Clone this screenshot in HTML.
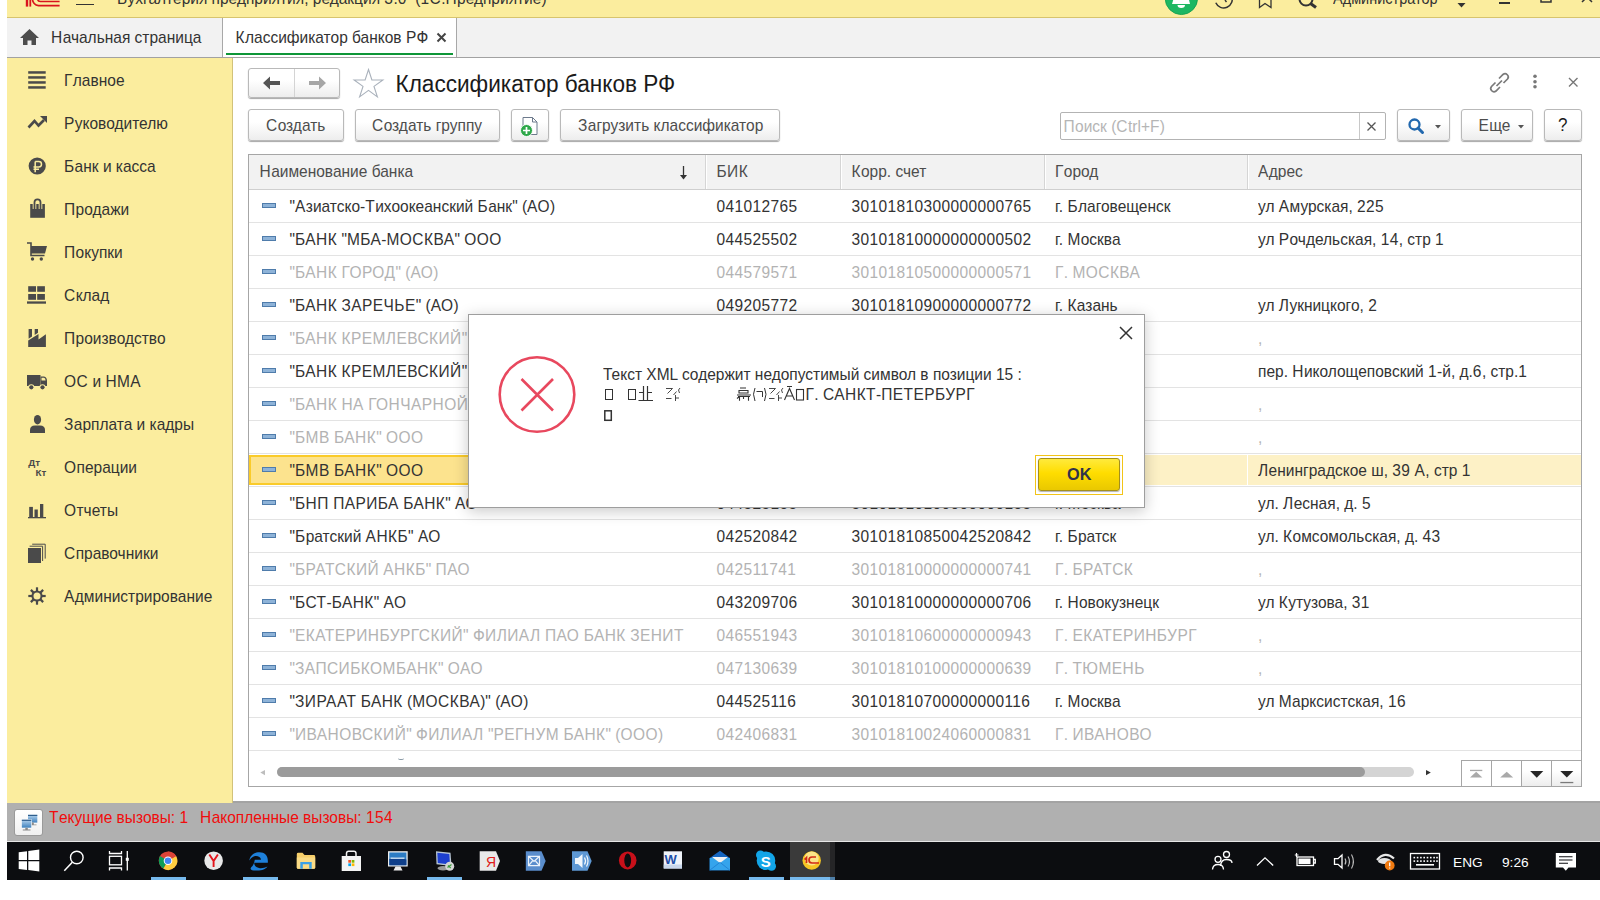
<!DOCTYPE html><html><head><meta charset="utf-8"><style>
html,body{margin:0;padding:0;}
body{width:1600px;height:900px;overflow:hidden;position:relative;background:#fff;font-family:"Liberation Sans", sans-serif;}
.t{position:absolute;white-space:pre;}
.b{position:absolute;box-sizing:border-box;}
.btn{position:absolute;box-sizing:border-box;border:1px solid #B9B9B9;border-radius:3px;background:linear-gradient(#FFFFFF 0%,#FFFFFF 40%,#EDEDED 100%);box-shadow:0 1px 1px rgba(0,0,0,0.35);}
svg{position:absolute;overflow:visible;}
</style></head><body>
<div class="b" style="left:7px;top:0px;width:1593px;height:17px;background:#FBED9E;"></div>
<div class="b" style="left:7px;top:17px;width:1593px;height:1px;background:#D7C46E;"></div>
<svg style="left:0px;top:0px;" width="1600" height="20" viewBox="0 0 1600 20"><g fill="#D9141E"><rect x="25.8" y="-2" width="2.4" height="8.6"/><rect x="29.4" y="-2" width="1.8" height="8.6"/></g><g fill="none" stroke="#D9141E" stroke-width="1.7"><path d="M59.6 5.6 H38.5 A6.5 6.5 0 0 1 32.5 -1"/><path d="M59.6 1.5 H40.5 A3 3 0 0 1 37.5 -1"/></g></svg>
<div class="b" style="left:76px;top:3.8px;width:17.8px;height:1.5px;background:#333;"></div>
<div class="t" style="left:117px;top:-9.67px;font-size:15.5px;line-height:18.6px;color:#333;transform:scaleY(1.08);transform-origin:0 14.67px;"><span style="letter-spacing:0.43px">Б</span>ухгалтерия предприятия, редакция <span style="letter-spacing:0.38px">3</span>.<span style="letter-spacing:0.38px">0</span>  (<span style="letter-spacing:0.38px">1</span><span style="letter-spacing:0.43px">С</span>:<span style="letter-spacing:0.43px">П</span>редприятие)</div>
<svg style="left:0px;top:0px;" width="1600" height="20" viewBox="0 0 1600 20"><circle cx="1181.4" cy="-1.65" r="16.2" fill="#1DB762" stroke="#12A04F" stroke-width="0.9"/><path d="M1173.5 -1 L1188.8 -1 L1190 4 L1172 4 Z" fill="#fff"/><path d="M1177.5 5 H1185 A3.75 3 0 0 1 1177.5 5 Z" fill="#fff"/></svg>
<svg style="left:0px;top:0px;" width="1600" height="20" viewBox="0 0 1600 20"><path d="M1215.8 2.8 A8.3 8.3 0 1 0 1231.5 -4" fill="none" stroke="#333" stroke-width="1.5"/><path d="M1225 0 L1226.5 2" stroke="#333" stroke-width="1.4"/></svg>
<svg style="left:1255px;top:-5px;" width="20" height="15" viewBox="0 0 20 15"><path d="M4.5 0 L4.5 12.5 L10 8.5 L16 12.5 L16 0" fill="none" stroke="#333" stroke-width="1.3" stroke-linejoin="miter"/></svg>
<svg style="left:1295px;top:-10px;" width="26" height="20" viewBox="0 0 26 20"><circle cx="11" cy="9" r="6.5" fill="none" stroke="#333" stroke-width="2"/><line x1="15.5" y1="13.5" x2="21" y2="17.5" stroke="#333" stroke-width="3"/></svg>
<div class="t" style="left:1333px;top:-8.72px;font-size:14.5px;line-height:17.4px;color:#333;transform:scaleY(1.08);transform-origin:0 13.72px;">Администратор</div>
<svg style="left:1455px;top:0px;" width="14" height="10" viewBox="0 0 14 10"><path d="M2.5 3 L10.5 3 L6.5 7.5Z" fill="#333"/></svg>
<div class="b" style="left:1499px;top:2px;width:11px;height:1.6px;background:#333;"></div>
<svg style="left:1538px;top:-6px;" width="18" height="12" viewBox="0 0 18 12"><rect x="3" y="0" width="10" height="8" fill="none" stroke="#333" stroke-width="1.5"/><path d="M6 -2 V-3 H16 V5 H13" fill="none" stroke="#333" stroke-width="1.3"/></svg>
<svg style="left:1580px;top:-8px;" width="18" height="14" viewBox="0 0 18 14"><path d="M2 0 L12 10 M12 0 L2 10" stroke="#333" stroke-width="1.5"/></svg>
<div class="b" style="left:7px;top:18px;width:1593px;height:39px;background:#F2F2F2;"></div>
<div class="b" style="left:7px;top:57px;width:1593px;height:1px;background:#A2A2A2;"></div>
<div class="b" style="left:222px;top:18px;width:1px;height:39px;background:#A8A8A8;"></div>
<div class="b" style="left:223px;top:18px;width:233px;height:39px;background:#FFFFFF;"></div>
<div class="b" style="left:456px;top:18px;width:1px;height:39px;background:#A8A8A8;"></div>
<div class="b" style="left:226px;top:53px;width:227px;height:2px;background:#0E9638;"></div>
<svg style="left:18px;top:27px;" width="24" height="20" viewBox="0 0 24 20"><path d="M11.5 2 L21 11 L18 11 L18 18 L13.5 18 L13.5 13.5 L9.5 13.5 L9.5 18 L5 18 L5 11 L2 11 Z" fill="#4D4D4D"/></svg>
<div class="t" style="left:51px;top:29.33px;font-size:15.5px;line-height:18.6px;color:#333;transform:scaleY(1.08);transform-origin:0 14.67px;"><span style="letter-spacing:0.43px">Н</span>ачальная страница</div>
<div class="t" style="left:235.5px;top:29.33px;font-size:15.5px;line-height:18.6px;color:#333;transform:scaleY(1.08);transform-origin:0 14.67px;"><span style="letter-spacing:0.43px">К</span>лассификатор банков <span style="letter-spacing:0.43px">РФ</span></div>
<svg style="left:436.3px;top:31.6px;" width="12" height="12" viewBox="0 0 12 12"><path d="M1.5 1.5 L9.5 9.5 M9.5 1.5 L1.5 9.5" stroke="#444" stroke-width="2"/></svg>
<div class="b" style="left:7px;top:58px;width:225px;height:745px;background:#FBED9E;"></div>
<div class="b" style="left:232px;top:58px;width:1px;height:745px;background:#D2C27A;"></div>
<div class="t" style="left:64px;top:72.33px;font-size:15.5px;line-height:18.6px;color:#333;transform:scaleY(1.08);transform-origin:0 14.67px;"><span style="letter-spacing:0.43px">Г</span>лавное</div>
<div class="t" style="left:64px;top:115.33px;font-size:15.5px;line-height:18.6px;color:#333;transform:scaleY(1.08);transform-origin:0 14.67px;"><span style="letter-spacing:0.43px">Р</span>уководителю</div>
<div class="t" style="left:64px;top:158.33px;font-size:15.5px;line-height:18.6px;color:#333;transform:scaleY(1.08);transform-origin:0 14.67px;"><span style="letter-spacing:0.43px">Б</span>анк и касса</div>
<div class="t" style="left:64px;top:201.33px;font-size:15.5px;line-height:18.6px;color:#333;transform:scaleY(1.08);transform-origin:0 14.67px;"><span style="letter-spacing:0.43px">П</span>родажи</div>
<div class="t" style="left:64px;top:244.33px;font-size:15.5px;line-height:18.6px;color:#333;transform:scaleY(1.08);transform-origin:0 14.67px;"><span style="letter-spacing:0.43px">П</span>окупки</div>
<div class="t" style="left:64px;top:287.33px;font-size:15.5px;line-height:18.6px;color:#333;transform:scaleY(1.08);transform-origin:0 14.67px;"><span style="letter-spacing:0.43px">С</span>клад</div>
<div class="t" style="left:64px;top:330.33px;font-size:15.5px;line-height:18.6px;color:#333;transform:scaleY(1.08);transform-origin:0 14.67px;"><span style="letter-spacing:0.43px">П</span>роизводство</div>
<div class="t" style="left:64px;top:373.33px;font-size:15.5px;line-height:18.6px;color:#333;transform:scaleY(1.08);transform-origin:0 14.67px;"><span style="letter-spacing:0.43px">ОС</span> и <span style="letter-spacing:0.43px">НМА</span></div>
<div class="t" style="left:64px;top:416.33px;font-size:15.5px;line-height:18.6px;color:#333;transform:scaleY(1.08);transform-origin:0 14.67px;"><span style="letter-spacing:0.43px">З</span>арплата и кадры</div>
<div class="t" style="left:64px;top:459.33px;font-size:15.5px;line-height:18.6px;color:#333;transform:scaleY(1.08);transform-origin:0 14.67px;"><span style="letter-spacing:0.43px">О</span>перации</div>
<div class="t" style="left:64px;top:502.33px;font-size:15.5px;line-height:18.6px;color:#333;transform:scaleY(1.08);transform-origin:0 14.67px;"><span style="letter-spacing:0.43px">О</span>тчеты</div>
<div class="t" style="left:64px;top:545.33px;font-size:15.5px;line-height:18.6px;color:#333;transform:scaleY(1.08);transform-origin:0 14.67px;"><span style="letter-spacing:0.43px">С</span>правочники</div>
<div class="t" style="left:64px;top:588.33px;font-size:15.5px;line-height:18.6px;color:#333;transform:scaleY(1.08);transform-origin:0 14.67px;"><span style="letter-spacing:0.43px">А</span>дминистрирование</div>
<svg style="left:0px;top:0px;pointer-events:none;z-index:1;" width="1600" height="900" viewBox="0 0 1600 900">
<g fill="#4A4A4A">
 <rect x="28.2" y="71.2" width="17.5" height="2.5"/><rect x="28.2" y="76.2" width="17.5" height="2.5"/><rect x="28.2" y="81.2" width="17.5" height="2.5"/><rect x="28.2" y="86.2" width="17.5" height="2.5"/>
 <path d="M28.5 127.5 L34.5 121 L38.5 125.5 L44 120" fill="none" stroke="#4A4A4A" stroke-width="2.6"/>
 <path d="M40 116 L47 116 L47 123 Z"/>
 <circle cx="37.2" cy="166" r="8.6"/>
 <path d="M30.2 204 H44.9 V217.8 H30.2 Z"/>
 <path d="M34.5 209 V202.3 A3 3 0 0 1 40.5 202.3 V209" fill="none" stroke="#FBED9E" stroke-width="3.6"/>
 <path d="M34.5 209 V202.3 A3 3 0 0 1 40.5 202.3 V209" fill="none" stroke="#4A4A4A" stroke-width="1.8"/>
 <path d="M27 243 H31 V255.5 H44.5" fill="none" stroke="#4A4A4A" stroke-width="1.6"/>
 <path d="M31 246 H47 L45 253.5 H31 Z"/>
 <circle cx="32.5" cy="259" r="1.7"/><circle cx="41.3" cy="259" r="1.7"/>
 <rect x="28.2" y="286.2" width="7.8" height="5.6"/><rect x="37.2" y="286.2" width="7.7" height="5.6"/>
 <rect x="28.2" y="294" width="7.8" height="5.8"/><rect x="37.2" y="294" width="7.7" height="5.8"/>
 <rect x="27" y="301.4" width="19" height="2.3"/>
 <path d="M28.6 329 H32 V336.6 L28.6 338.7 Z"/><path d="M34.7 329 H38 V332.8 L34.7 334.9 Z"/>
 <path d="M28.2 340.5 L38.5 334 L38.5 339.5 L45.9 334.3 L45.9 347 L28.2 347 Z"/>
 <path d="M27 375 H40.5 V386 H27 Z"/>
 <path d="M40.5 376.5 H44 Q47 377 47 381 V386 H40.5 Z"/>
 <circle cx="31.3" cy="387.3" r="3.1" fill="#FBED9E"/><circle cx="42.5" cy="387.3" r="3.1" fill="#FBED9E"/>
 <circle cx="31.3" cy="387.3" r="2.1"/><circle cx="42.5" cy="387.3" r="2.1"/>
 <ellipse cx="37.5" cy="419.7" rx="3.6" ry="4.8"/>
 <path d="M30 433 V430 Q30 425.5 35 425.5 H40 Q45 425.5 45 430 V433 Z"/>
 <rect x="29.2" y="506.9" width="3.7" height="10.3"/><rect x="34.5" y="509.5" width="3.3" height="7.7"/><rect x="40" y="504" width="3.3" height="13.2"/>
 <rect x="28" y="517" width="18" height="1.3"/>
 <rect x="28" y="548" width="13" height="15"/>
 <path d="M29.6 546.2 H42.6 V561" fill="none" stroke="#4A4A4A" stroke-width="1"/>
 <path d="M32.2 544.2 H45.2 V558.6" fill="none" stroke="#4A4A4A" stroke-width="1"/>
</g>
<g fill="#FBED9E">
 <path d="M35.2 161.6 H38.8 A2.7 2.7 0 0 1 38.8 167 H33.5 M35.2 161.6 V172.3 M33.5 169.3 H39" fill="none" stroke="#FBED9E" stroke-width="1.5"/>
 <path d="M41.5 377.8 H44 Q45.5 378 45.6 380.6 H41.5 Z"/>
</g>
<g stroke="#4A4A4A" stroke-width="2.2"><line x1="40.00" y1="596.00" x2="45.70" y2="596.00"/><line x1="39.12" y1="598.12" x2="43.15" y2="602.15"/><line x1="37.00" y1="599.00" x2="37.00" y2="604.70"/><line x1="34.88" y1="598.12" x2="30.85" y2="602.15"/><line x1="34.00" y1="596.00" x2="28.30" y2="596.00"/><line x1="34.88" y1="593.88" x2="30.85" y2="589.85"/><line x1="37.00" y1="593.00" x2="37.00" y2="587.30"/><line x1="39.12" y1="593.88" x2="43.15" y2="589.85"/></g><circle cx="37" cy="596" r="5.6" fill="#4A4A4A"/><circle cx="37" cy="596" r="3.5" fill="#FBED9E"/>
</svg>
<div class="t" style="left:28.3px;top:457.32px;font-size:9.8px;line-height:11.76px;color:#4A4A4A;font-weight:bold;z-index:2;">Дт</div>
<div class="t" style="left:35.6px;top:467.02px;font-size:9.8px;line-height:11.76px;color:#4A4A4A;font-weight:bold;z-index:2;">Кт</div>
<div class="btn" style="left:248px;top:68px;width:92px;height:30px;"></div>
<div class="b" style="left:294px;top:69px;width:1px;height:28px;background:#D4D4D4;"></div>
<svg style="left:260px;top:74px;" width="24" height="18" viewBox="0 0 24 18"><path d="M3 9 L10 2.5 L10 7 L20 7 L20 11 L10 11 L10 15.5 Z" fill="#555"/></svg>
<svg style="left:305px;top:74px;" width="24" height="18" viewBox="0 0 24 18"><path d="M21 9 L14 2.5 L14 7 L4 7 L4 11 L14 11 L14 15.5 Z" fill="#A6A6A6"/></svg>
<svg style="left:0px;top:0px;" width="1600" height="900" viewBox="0 0 1600 900"><path d="M368.50 69.50 L371.89 79.93 L382.86 79.93 L373.99 86.38 L377.38 96.82 L368.50 90.37 L359.62 96.82 L363.01 86.38 L354.14 79.93 L365.11 79.93 Z" fill="none" stroke="#A9B1BB" stroke-width="1.1" stroke-linejoin="miter"/></svg>
<div class="t" style="left:395.5px;top:70.61px;font-size:22.6px;line-height:27.12px;color:#1A1A1A;transform:scaleY(1.08);transform-origin:0 21.39px;">Классификатор банков РФ</div>
<svg style="left:1486px;top:70px;" width="26" height="24" viewBox="0 0 26 24"><g fill="none" stroke="#7A7A7A" stroke-width="1.7"><path d="M9.5 12.5 L5.5 16.5 A3.2 3.2 0 0 0 10 21 L14 17"/><path d="M13 8.5 L17 4.5 A3.2 3.2 0 0 1 21.5 9 L17.5 13"/><line x1="10.5" y1="16" x2="16" y2="10.5"/></g></svg>
<svg style="left:1530px;top:72px;" width="10" height="20" viewBox="0 0 10 20"><circle cx="5" cy="4.3" r="1.8" fill="#777"/><circle cx="5" cy="9.8" r="1.8" fill="#777"/><circle cx="5" cy="14.7" r="1.8" fill="#777"/></svg>
<svg style="left:1566px;top:75px;" width="14" height="14" viewBox="0 0 14 14"><path d="M3 3 L11.5 11.5 M11.5 3 L3 11.5" stroke="#777" stroke-width="1.4"/></svg>
<div class="btn" style="left:248px;top:109px;width:96px;height:32px;"></div>
<div class="t" style="left:266px;top:117.33px;font-size:15.5px;line-height:18.6px;color:#4D4D4D;transform:scaleY(1.08);transform-origin:0 14.67px;"><span style="letter-spacing:0.43px">С</span>оздать</div>
<div class="btn" style="left:355px;top:109px;width:145px;height:32px;"></div>
<div class="t" style="left:372px;top:117.33px;font-size:15.5px;line-height:18.6px;color:#4D4D4D;transform:scaleY(1.08);transform-origin:0 14.67px;"><span style="letter-spacing:0.43px">С</span>оздать группу</div>
<div class="btn" style="left:511px;top:109px;width:38px;height:32px;"></div>
<svg style="left:515px;top:112px;" width="30" height="28" viewBox="0 0 30 28"><path d="M8 5.5 H17.5 L22 10 V22.5 H8 Z" fill="#fff" stroke="#6D7A8C" stroke-width="1"/><path d="M17.5 5.5 V10 H22" fill="none" stroke="#6D7A8C" stroke-width="1"/><circle cx="11.5" cy="18.5" r="6" fill="#2EA84A" stroke="#fff" stroke-width="0.9"/><path d="M11.5 15 V22 M8 18.5 H15" stroke="#fff" stroke-width="1.7"/></svg>
<div class="btn" style="left:560px;top:109px;width:220px;height:32px;"></div>
<div class="t" style="left:578px;top:117.33px;font-size:15.5px;line-height:18.6px;color:#4D4D4D;transform:scaleY(1.08);transform-origin:0 14.67px;"><span style="letter-spacing:0.43px">З</span>агрузить классификатор</div>
<div class="b" style="left:1060px;top:112px;width:326px;height:28px;border:1px solid #B3B3B3;border-radius:2px;background:#fff;"></div>
<div class="b" style="left:1359px;top:113px;width:1px;height:26px;background:#C8C8C8;"></div>
<div class="t" style="left:1063.5px;top:118.33px;font-size:15.5px;line-height:18.6px;color:#B5B5B5;transform:scaleY(1.08);transform-origin:0 14.67px;"><span style="letter-spacing:0.43px">П</span>оиск (<span style="letter-spacing:0.43px">C</span>trl+<span style="letter-spacing:0.43px">F</span>)</div>
<svg style="left:1365px;top:120px;" width="14" height="14" viewBox="0 0 14 14"><path d="M2.5 2.5 L10.5 10.5 M10.5 2.5 L2.5 10.5" stroke="#555" stroke-width="1.3"/></svg>
<div class="btn" style="left:1397px;top:109px;width:53px;height:32px;"></div>
<svg style="left:1403.5px;top:113.5px;" width="26" height="24" viewBox="0 0 26 24"><circle cx="10.5" cy="10.5" r="5" fill="none" stroke="#2268AE" stroke-width="2.3"/><line x1="14" y1="14" x2="18.5" y2="18.5" stroke="#2268AE" stroke-width="3" stroke-linecap="round"/></svg>
<svg style="left:1434px;top:123px;" width="10" height="8" viewBox="0 0 10 8"><path d="M1 2 L7 2 L4 5.5Z" fill="#555"/></svg>
<div class="btn" style="left:1461px;top:109px;width:72px;height:32px;"></div>
<div class="t" style="left:1478.5px;top:117.33px;font-size:15.5px;line-height:18.6px;color:#4D4D4D;transform:scaleY(1.08);transform-origin:0 14.67px;"><span style="letter-spacing:0.43px">Е</span>ще</div>
<svg style="left:1517px;top:123px;" width="10" height="8" viewBox="0 0 10 8"><path d="M1 2 L7 2 L4 5.5Z" fill="#555"/></svg>
<div class="btn" style="left:1544px;top:109px;width:38px;height:32px;"></div>
<div class="t" style="left:1558px;top:116.41px;font-size:17px;line-height:20.4px;color:#1A1A1A;transform:scaleY(1.08);transform-origin:0 16.09px;">?</div>
<div class="b" style="left:248px;top:154px;width:1334px;height:633px;border:1px solid #A6A6A6;background:#fff;"></div>
<div class="b" style="left:249px;top:155px;width:1332px;height:34px;background:#F2F2F2;"></div>
<div class="b" style="left:249px;top:189px;width:1332px;height:1px;background:#CFCFCF;"></div>
<div class="b" style="left:705px;top:155px;width:1px;height:34px;background:#D5D5D5;"></div>
<div class="b" style="left:706px;top:155px;width:1px;height:34px;background:#FFFFFF;"></div>
<div class="b" style="left:840px;top:155px;width:1px;height:34px;background:#D5D5D5;"></div>
<div class="b" style="left:841px;top:155px;width:1px;height:34px;background:#FFFFFF;"></div>
<div class="b" style="left:1044px;top:155px;width:1px;height:34px;background:#D5D5D5;"></div>
<div class="b" style="left:1045px;top:155px;width:1px;height:34px;background:#FFFFFF;"></div>
<div class="b" style="left:1247px;top:155px;width:1px;height:34px;background:#D5D5D5;"></div>
<div class="b" style="left:1248px;top:155px;width:1px;height:34px;background:#FFFFFF;"></div>
<div class="t" style="left:259.5px;top:163.33px;font-size:15.5px;line-height:18.6px;color:#4D4D4D;transform:scaleY(1.08);transform-origin:0 14.67px;"><span style="letter-spacing:0.43px">Н</span>аименование банка</div>
<svg style="left:676px;top:163px;" width="14" height="20" viewBox="0 0 14 20"><path d="M7.5 3 V14" stroke="#333" stroke-width="1.3"/><path d="M4 12 L11 12 L7.5 16.5 Z" fill="#333"/></svg>
<div class="t" style="left:716.5px;top:163.33px;font-size:15.5px;line-height:18.6px;color:#4D4D4D;transform:scaleY(1.08);transform-origin:0 14.67px;"><span style="letter-spacing:0.43px">БИК</span></div>
<div class="t" style="left:851.5px;top:163.33px;font-size:15.5px;line-height:18.6px;color:#4D4D4D;transform:scaleY(1.08);transform-origin:0 14.67px;"><span style="letter-spacing:0.43px">К</span>орр. счет</div>
<div class="t" style="left:1055px;top:163.33px;font-size:15.5px;line-height:18.6px;color:#4D4D4D;transform:scaleY(1.08);transform-origin:0 14.67px;"><span style="letter-spacing:0.43px">Г</span>ород</div>
<div class="t" style="left:1258px;top:163.33px;font-size:15.5px;line-height:18.6px;color:#4D4D4D;transform:scaleY(1.08);transform-origin:0 14.67px;"><span style="letter-spacing:0.43px">А</span>дрес</div>
<div class="b" style="left:249px;top:222px;width:1332px;height:1px;background:#E3E3E3;"></div>
<div class="b" style="left:262px;top:203px;width:14px;height:5px;background:#8EB3D8;border:1px solid #4F7CAB;"></div>
<div class="t" style="left:289.5px;top:197.83px;font-size:15.5px;line-height:18.6px;color:#333333;transform:scaleY(1.08);transform-origin:0 14.67px;">"<span style="letter-spacing:0.43px">А</span>зиатско-<span style="letter-spacing:0.43px">Т</span>ихоокеанский <span style="letter-spacing:0.43px">Б</span>анк" (<span style="letter-spacing:0.43px">АО</span>)</div>
<div class="t" style="left:716.5px;top:197.83px;font-size:15.5px;line-height:18.6px;color:#333333;transform:scaleY(1.08);transform-origin:0 14.67px;"><span style="letter-spacing:0.38px">041012765</span></div>
<div class="t" style="left:851.5px;top:197.83px;font-size:15.5px;line-height:18.6px;color:#333333;transform:scaleY(1.08);transform-origin:0 14.67px;"><span style="letter-spacing:0.38px">30101810300000000765</span></div>
<div class="t" style="left:1055px;top:197.83px;font-size:15.5px;line-height:18.6px;color:#333333;transform:scaleY(1.08);transform-origin:0 14.67px;">г. <span style="letter-spacing:0.43px">Б</span>лаговещенск</div>
<div class="t" style="left:1258px;top:197.83px;font-size:15.5px;line-height:18.6px;color:#333333;transform:scaleY(1.08);transform-origin:0 14.67px;">ул <span style="letter-spacing:0.43px">А</span>мурская, <span style="letter-spacing:0.38px">225</span></div>
<div class="b" style="left:249px;top:255px;width:1332px;height:1px;background:#E3E3E3;"></div>
<div class="b" style="left:262px;top:236px;width:14px;height:5px;background:#8EB3D8;border:1px solid #4F7CAB;"></div>
<div class="t" style="left:289.5px;top:230.83px;font-size:15.5px;line-height:18.6px;color:#333333;transform:scaleY(1.08);transform-origin:0 14.67px;">"<span style="letter-spacing:0.43px">БАНК</span> "<span style="letter-spacing:0.43px">МБА</span>-<span style="letter-spacing:0.43px">МОСКВА</span>" <span style="letter-spacing:0.43px">ООО</span></div>
<div class="t" style="left:716.5px;top:230.83px;font-size:15.5px;line-height:18.6px;color:#333333;transform:scaleY(1.08);transform-origin:0 14.67px;"><span style="letter-spacing:0.38px">044525502</span></div>
<div class="t" style="left:851.5px;top:230.83px;font-size:15.5px;line-height:18.6px;color:#333333;transform:scaleY(1.08);transform-origin:0 14.67px;"><span style="letter-spacing:0.38px">30101810000000000502</span></div>
<div class="t" style="left:1055px;top:230.83px;font-size:15.5px;line-height:18.6px;color:#333333;transform:scaleY(1.08);transform-origin:0 14.67px;">г. <span style="letter-spacing:0.43px">М</span>осква</div>
<div class="t" style="left:1258px;top:230.83px;font-size:15.5px;line-height:18.6px;color:#333333;transform:scaleY(1.08);transform-origin:0 14.67px;">ул <span style="letter-spacing:0.43px">Р</span>очдельская, <span style="letter-spacing:0.38px">14</span>, стр <span style="letter-spacing:0.38px">1</span></div>
<div class="b" style="left:249px;top:288px;width:1332px;height:1px;background:#E3E3E3;"></div>
<div class="b" style="left:262px;top:269px;width:14px;height:5px;background:#8EB3D8;border:1px solid #4F7CAB;"></div>
<div class="t" style="left:289.5px;top:263.83px;font-size:15.5px;line-height:18.6px;color:#B3B3B3;transform:scaleY(1.08);transform-origin:0 14.67px;">"<span style="letter-spacing:0.43px">БАНК</span> <span style="letter-spacing:0.43px">ГОРОД</span>" (<span style="letter-spacing:0.43px">АО</span>)</div>
<div class="t" style="left:716.5px;top:263.83px;font-size:15.5px;line-height:18.6px;color:#B3B3B3;transform:scaleY(1.08);transform-origin:0 14.67px;"><span style="letter-spacing:0.38px">044579571</span></div>
<div class="t" style="left:851.5px;top:263.83px;font-size:15.5px;line-height:18.6px;color:#B3B3B3;transform:scaleY(1.08);transform-origin:0 14.67px;"><span style="letter-spacing:0.38px">30101810500000000571</span></div>
<div class="t" style="left:1055px;top:263.83px;font-size:15.5px;line-height:18.6px;color:#B3B3B3;transform:scaleY(1.08);transform-origin:0 14.67px;"><span style="letter-spacing:0.43px">Г</span>. <span style="letter-spacing:0.43px">МОСКВА</span></div>
<div class="t" style="left:1258px;top:263.83px;font-size:15.5px;line-height:18.6px;color:#B3B3B3;transform:scaleY(1.08);transform-origin:0 14.67px;"></div>
<div class="b" style="left:249px;top:321px;width:1332px;height:1px;background:#E3E3E3;"></div>
<div class="b" style="left:262px;top:302px;width:14px;height:5px;background:#8EB3D8;border:1px solid #4F7CAB;"></div>
<div class="t" style="left:289.5px;top:296.83px;font-size:15.5px;line-height:18.6px;color:#333333;transform:scaleY(1.08);transform-origin:0 14.67px;">"<span style="letter-spacing:0.43px">БАНК</span> <span style="letter-spacing:0.43px">ЗАРЕЧЬЕ</span>" (<span style="letter-spacing:0.43px">АО</span>)</div>
<div class="t" style="left:716.5px;top:296.83px;font-size:15.5px;line-height:18.6px;color:#333333;transform:scaleY(1.08);transform-origin:0 14.67px;"><span style="letter-spacing:0.38px">049205772</span></div>
<div class="t" style="left:851.5px;top:296.83px;font-size:15.5px;line-height:18.6px;color:#333333;transform:scaleY(1.08);transform-origin:0 14.67px;"><span style="letter-spacing:0.38px">30101810900000000772</span></div>
<div class="t" style="left:1055px;top:296.83px;font-size:15.5px;line-height:18.6px;color:#333333;transform:scaleY(1.08);transform-origin:0 14.67px;">г. <span style="letter-spacing:0.43px">К</span>азань</div>
<div class="t" style="left:1258px;top:296.83px;font-size:15.5px;line-height:18.6px;color:#333333;transform:scaleY(1.08);transform-origin:0 14.67px;">ул <span style="letter-spacing:0.43px">Л</span>укницкого, <span style="letter-spacing:0.38px">2</span></div>
<div class="b" style="left:249px;top:354px;width:1332px;height:1px;background:#E3E3E3;"></div>
<div class="b" style="left:262px;top:335px;width:14px;height:5px;background:#8EB3D8;border:1px solid #4F7CAB;"></div>
<div class="t" style="left:289.5px;top:329.83px;font-size:15.5px;line-height:18.6px;color:#B3B3B3;transform:scaleY(1.08);transform-origin:0 14.67px;">"<span style="letter-spacing:0.43px">БАНК</span> <span style="letter-spacing:0.43px">КРЕМЛЕВСКИЙ</span>" <span style="letter-spacing:0.43px">ООО</span></div>
<div class="t" style="left:716.5px;top:329.83px;font-size:15.5px;line-height:18.6px;color:#B3B3B3;transform:scaleY(1.08);transform-origin:0 14.67px;"><span style="letter-spacing:0.38px">044525594</span></div>
<div class="t" style="left:851.5px;top:329.83px;font-size:15.5px;line-height:18.6px;color:#B3B3B3;transform:scaleY(1.08);transform-origin:0 14.67px;"><span style="letter-spacing:0.38px">30101810400000000594</span></div>
<div class="t" style="left:1055px;top:329.83px;font-size:15.5px;line-height:18.6px;color:#B3B3B3;transform:scaleY(1.08);transform-origin:0 14.67px;"><span style="letter-spacing:0.43px">Г</span>. <span style="letter-spacing:0.43px">МОСКВА</span></div>
<div class="t" style="left:1258px;top:329.83px;font-size:15.5px;line-height:18.6px;color:#B3B3B3;transform:scaleY(1.08);transform-origin:0 14.67px;">,</div>
<div class="b" style="left:249px;top:387px;width:1332px;height:1px;background:#E3E3E3;"></div>
<div class="b" style="left:262px;top:368px;width:14px;height:5px;background:#8EB3D8;border:1px solid #4F7CAB;"></div>
<div class="t" style="left:289.5px;top:362.83px;font-size:15.5px;line-height:18.6px;color:#333333;transform:scaleY(1.08);transform-origin:0 14.67px;">"<span style="letter-spacing:0.43px">БАНК</span> <span style="letter-spacing:0.43px">КРЕМЛЕВСКИЙ</span>" <span style="letter-spacing:0.43px">ООО</span></div>
<div class="t" style="left:716.5px;top:362.83px;font-size:15.5px;line-height:18.6px;color:#333333;transform:scaleY(1.08);transform-origin:0 14.67px;"><span style="letter-spacing:0.38px">044525594</span></div>
<div class="t" style="left:851.5px;top:362.83px;font-size:15.5px;line-height:18.6px;color:#333333;transform:scaleY(1.08);transform-origin:0 14.67px;"><span style="letter-spacing:0.38px">30101810400000000594</span></div>
<div class="t" style="left:1055px;top:362.83px;font-size:15.5px;line-height:18.6px;color:#333333;transform:scaleY(1.08);transform-origin:0 14.67px;">г. <span style="letter-spacing:0.43px">М</span>осква</div>
<div class="t" style="left:1258px;top:362.83px;font-size:15.5px;line-height:18.6px;color:#333333;transform:scaleY(1.08);transform-origin:0 14.67px;">пер. <span style="letter-spacing:0.43px">Н</span>иколощеповский <span style="letter-spacing:0.38px">1</span>-й, д.<span style="letter-spacing:0.38px">6</span>, стр.<span style="letter-spacing:0.38px">1</span></div>
<div class="b" style="left:249px;top:420px;width:1332px;height:1px;background:#E3E3E3;"></div>
<div class="b" style="left:262px;top:401px;width:14px;height:5px;background:#8EB3D8;border:1px solid #4F7CAB;"></div>
<div class="t" style="left:289.5px;top:395.83px;font-size:15.5px;line-height:18.6px;color:#B3B3B3;transform:scaleY(1.08);transform-origin:0 14.67px;">"<span style="letter-spacing:0.43px">БАНК</span> <span style="letter-spacing:0.43px">НА</span> <span style="letter-spacing:0.43px">ГОНЧАРНОЙ</span>" (<span style="letter-spacing:0.43px">АО</span>)</div>
<div class="t" style="left:716.5px;top:395.83px;font-size:15.5px;line-height:18.6px;color:#B3B3B3;transform:scaleY(1.08);transform-origin:0 14.67px;"><span style="letter-spacing:0.38px">044525311</span></div>
<div class="t" style="left:851.5px;top:395.83px;font-size:15.5px;line-height:18.6px;color:#B3B3B3;transform:scaleY(1.08);transform-origin:0 14.67px;"><span style="letter-spacing:0.38px">30101810200000000311</span></div>
<div class="t" style="left:1055px;top:395.83px;font-size:15.5px;line-height:18.6px;color:#B3B3B3;transform:scaleY(1.08);transform-origin:0 14.67px;"><span style="letter-spacing:0.43px">Г</span>. <span style="letter-spacing:0.43px">МОСКВА</span></div>
<div class="t" style="left:1258px;top:395.83px;font-size:15.5px;line-height:18.6px;color:#B3B3B3;transform:scaleY(1.08);transform-origin:0 14.67px;">,</div>
<div class="b" style="left:249px;top:453px;width:1332px;height:1px;background:#E3E3E3;"></div>
<div class="b" style="left:262px;top:434px;width:14px;height:5px;background:#8EB3D8;border:1px solid #4F7CAB;"></div>
<div class="t" style="left:289.5px;top:428.83px;font-size:15.5px;line-height:18.6px;color:#B3B3B3;transform:scaleY(1.08);transform-origin:0 14.67px;">"<span style="letter-spacing:0.43px">БМВ</span> <span style="letter-spacing:0.43px">БАНК</span>" <span style="letter-spacing:0.43px">ООО</span></div>
<div class="t" style="left:716.5px;top:428.83px;font-size:15.5px;line-height:18.6px;color:#B3B3B3;transform:scaleY(1.08);transform-origin:0 14.67px;"><span style="letter-spacing:0.38px">044525767</span></div>
<div class="t" style="left:851.5px;top:428.83px;font-size:15.5px;line-height:18.6px;color:#B3B3B3;transform:scaleY(1.08);transform-origin:0 14.67px;"><span style="letter-spacing:0.38px">30101810900000000767</span></div>
<div class="t" style="left:1055px;top:428.83px;font-size:15.5px;line-height:18.6px;color:#B3B3B3;transform:scaleY(1.08);transform-origin:0 14.67px;"><span style="letter-spacing:0.43px">Г</span>. <span style="letter-spacing:0.43px">МОСКВА</span></div>
<div class="t" style="left:1258px;top:428.83px;font-size:15.5px;line-height:18.6px;color:#B3B3B3;transform:scaleY(1.08);transform-origin:0 14.67px;">,</div>
<div class="b" style="left:249px;top:455px;width:1332px;height:30px;background:#FDF1C6;"></div>
<div class="b" style="left:249px;top:455px;width:456px;height:30px;border:2.5px solid #FACB2A;background:#FCE38E;"></div>
<div class="b" style="left:1247px;top:455px;width:1px;height:30px;background:#FFFFFF;"></div>
<div class="b" style="left:249px;top:486px;width:1332px;height:1px;background:#E3E3E3;"></div>
<div class="b" style="left:262px;top:467px;width:14px;height:5px;background:#8EB3D8;border:1px solid #4F7CAB;"></div>
<div class="t" style="left:289.5px;top:461.83px;font-size:15.5px;line-height:18.6px;color:#333333;transform:scaleY(1.08);transform-origin:0 14.67px;">"<span style="letter-spacing:0.43px">БМВ</span> <span style="letter-spacing:0.43px">БАНК</span>" <span style="letter-spacing:0.43px">ООО</span></div>
<div class="t" style="left:716.5px;top:461.83px;font-size:15.5px;line-height:18.6px;color:#333333;transform:scaleY(1.08);transform-origin:0 14.67px;"><span style="letter-spacing:0.38px">044525767</span></div>
<div class="t" style="left:851.5px;top:461.83px;font-size:15.5px;line-height:18.6px;color:#333333;transform:scaleY(1.08);transform-origin:0 14.67px;"><span style="letter-spacing:0.38px">30101810900000000767</span></div>
<div class="t" style="left:1055px;top:461.83px;font-size:15.5px;line-height:18.6px;color:#333333;transform:scaleY(1.08);transform-origin:0 14.67px;">г. <span style="letter-spacing:0.43px">М</span>осква</div>
<div class="t" style="left:1258px;top:461.83px;font-size:15.5px;line-height:18.6px;color:#333333;transform:scaleY(1.08);transform-origin:0 14.67px;"><span style="letter-spacing:0.43px">Л</span>енинградское ш, <span style="letter-spacing:0.38px">39</span> <span style="letter-spacing:0.43px">А</span>, стр <span style="letter-spacing:0.38px">1</span></div>
<div class="b" style="left:249px;top:519px;width:1332px;height:1px;background:#E3E3E3;"></div>
<div class="b" style="left:262px;top:500px;width:14px;height:5px;background:#8EB3D8;border:1px solid #4F7CAB;"></div>
<div class="t" style="left:289.5px;top:494.83px;font-size:15.5px;line-height:18.6px;color:#333333;transform:scaleY(1.08);transform-origin:0 14.67px;">"<span style="letter-spacing:0.43px">БНП</span> <span style="letter-spacing:0.43px">ПАРИБА</span> <span style="letter-spacing:0.43px">БАНК</span>" <span style="letter-spacing:0.43px">АО</span></div>
<div class="t" style="left:716.5px;top:494.83px;font-size:15.5px;line-height:18.6px;color:#333333;transform:scaleY(1.08);transform-origin:0 14.67px;"><span style="letter-spacing:0.38px">044525185</span></div>
<div class="t" style="left:851.5px;top:494.83px;font-size:15.5px;line-height:18.6px;color:#333333;transform:scaleY(1.08);transform-origin:0 14.67px;"><span style="letter-spacing:0.38px">30101810100000000185</span></div>
<div class="t" style="left:1055px;top:494.83px;font-size:15.5px;line-height:18.6px;color:#333333;transform:scaleY(1.08);transform-origin:0 14.67px;">г. <span style="letter-spacing:0.43px">М</span>осква</div>
<div class="t" style="left:1258px;top:494.83px;font-size:15.5px;line-height:18.6px;color:#333333;transform:scaleY(1.08);transform-origin:0 14.67px;">ул. <span style="letter-spacing:0.43px">Л</span>есная, д. <span style="letter-spacing:0.38px">5</span></div>
<div class="b" style="left:249px;top:552px;width:1332px;height:1px;background:#E3E3E3;"></div>
<div class="b" style="left:262px;top:533px;width:14px;height:5px;background:#8EB3D8;border:1px solid #4F7CAB;"></div>
<div class="t" style="left:289.5px;top:527.83px;font-size:15.5px;line-height:18.6px;color:#333333;transform:scaleY(1.08);transform-origin:0 14.67px;">"<span style="letter-spacing:0.43px">Б</span>ратский <span style="letter-spacing:0.43px">АНКБ</span>" <span style="letter-spacing:0.43px">АО</span></div>
<div class="t" style="left:716.5px;top:527.83px;font-size:15.5px;line-height:18.6px;color:#333333;transform:scaleY(1.08);transform-origin:0 14.67px;"><span style="letter-spacing:0.38px">042520842</span></div>
<div class="t" style="left:851.5px;top:527.83px;font-size:15.5px;line-height:18.6px;color:#333333;transform:scaleY(1.08);transform-origin:0 14.67px;"><span style="letter-spacing:0.38px">30101810850042520842</span></div>
<div class="t" style="left:1055px;top:527.83px;font-size:15.5px;line-height:18.6px;color:#333333;transform:scaleY(1.08);transform-origin:0 14.67px;">г. <span style="letter-spacing:0.43px">Б</span>ратск</div>
<div class="t" style="left:1258px;top:527.83px;font-size:15.5px;line-height:18.6px;color:#333333;transform:scaleY(1.08);transform-origin:0 14.67px;">ул. <span style="letter-spacing:0.43px">К</span>омсомольская, д. <span style="letter-spacing:0.38px">43</span></div>
<div class="b" style="left:249px;top:585px;width:1332px;height:1px;background:#E3E3E3;"></div>
<div class="b" style="left:262px;top:566px;width:14px;height:5px;background:#8EB3D8;border:1px solid #4F7CAB;"></div>
<div class="t" style="left:289.5px;top:560.83px;font-size:15.5px;line-height:18.6px;color:#B3B3B3;transform:scaleY(1.08);transform-origin:0 14.67px;">"<span style="letter-spacing:0.43px">БРАТСКИЙ</span> <span style="letter-spacing:0.43px">АНКБ</span>" <span style="letter-spacing:0.43px">ПАО</span></div>
<div class="t" style="left:716.5px;top:560.83px;font-size:15.5px;line-height:18.6px;color:#B3B3B3;transform:scaleY(1.08);transform-origin:0 14.67px;"><span style="letter-spacing:0.38px">042511741</span></div>
<div class="t" style="left:851.5px;top:560.83px;font-size:15.5px;line-height:18.6px;color:#B3B3B3;transform:scaleY(1.08);transform-origin:0 14.67px;"><span style="letter-spacing:0.38px">30101810000000000741</span></div>
<div class="t" style="left:1055px;top:560.83px;font-size:15.5px;line-height:18.6px;color:#B3B3B3;transform:scaleY(1.08);transform-origin:0 14.67px;"><span style="letter-spacing:0.43px">Г</span>. <span style="letter-spacing:0.43px">БРАТСК</span></div>
<div class="t" style="left:1258px;top:560.83px;font-size:15.5px;line-height:18.6px;color:#B3B3B3;transform:scaleY(1.08);transform-origin:0 14.67px;">,</div>
<div class="b" style="left:249px;top:618px;width:1332px;height:1px;background:#E3E3E3;"></div>
<div class="b" style="left:262px;top:599px;width:14px;height:5px;background:#8EB3D8;border:1px solid #4F7CAB;"></div>
<div class="t" style="left:289.5px;top:593.83px;font-size:15.5px;line-height:18.6px;color:#333333;transform:scaleY(1.08);transform-origin:0 14.67px;">"<span style="letter-spacing:0.43px">БСТ</span>-<span style="letter-spacing:0.43px">БАНК</span>" <span style="letter-spacing:0.43px">АО</span></div>
<div class="t" style="left:716.5px;top:593.83px;font-size:15.5px;line-height:18.6px;color:#333333;transform:scaleY(1.08);transform-origin:0 14.67px;"><span style="letter-spacing:0.38px">043209706</span></div>
<div class="t" style="left:851.5px;top:593.83px;font-size:15.5px;line-height:18.6px;color:#333333;transform:scaleY(1.08);transform-origin:0 14.67px;"><span style="letter-spacing:0.38px">30101810000000000706</span></div>
<div class="t" style="left:1055px;top:593.83px;font-size:15.5px;line-height:18.6px;color:#333333;transform:scaleY(1.08);transform-origin:0 14.67px;">г. <span style="letter-spacing:0.43px">Н</span>овокузнецк</div>
<div class="t" style="left:1258px;top:593.83px;font-size:15.5px;line-height:18.6px;color:#333333;transform:scaleY(1.08);transform-origin:0 14.67px;">ул <span style="letter-spacing:0.43px">К</span>утузова, <span style="letter-spacing:0.38px">31</span></div>
<div class="b" style="left:249px;top:651px;width:1332px;height:1px;background:#E3E3E3;"></div>
<div class="b" style="left:262px;top:632px;width:14px;height:5px;background:#8EB3D8;border:1px solid #4F7CAB;"></div>
<div class="t" style="left:289.5px;top:626.83px;font-size:15.5px;line-height:18.6px;color:#B3B3B3;transform:scaleY(1.08);transform-origin:0 14.67px;">"<span style="letter-spacing:0.43px">ЕКАТЕРИНБУРГСКИЙ</span>" <span style="letter-spacing:0.43px">ФИЛИАЛ</span> <span style="letter-spacing:0.43px">ПАО</span> <span style="letter-spacing:0.43px">БАНК</span> <span style="letter-spacing:0.43px">ЗЕНИТ</span></div>
<div class="t" style="left:716.5px;top:626.83px;font-size:15.5px;line-height:18.6px;color:#B3B3B3;transform:scaleY(1.08);transform-origin:0 14.67px;"><span style="letter-spacing:0.38px">046551943</span></div>
<div class="t" style="left:851.5px;top:626.83px;font-size:15.5px;line-height:18.6px;color:#B3B3B3;transform:scaleY(1.08);transform-origin:0 14.67px;"><span style="letter-spacing:0.38px">30101810600000000943</span></div>
<div class="t" style="left:1055px;top:626.83px;font-size:15.5px;line-height:18.6px;color:#B3B3B3;transform:scaleY(1.08);transform-origin:0 14.67px;"><span style="letter-spacing:0.43px">Г</span>. <span style="letter-spacing:0.43px">ЕКАТЕРИНБУРГ</span></div>
<div class="t" style="left:1258px;top:626.83px;font-size:15.5px;line-height:18.6px;color:#B3B3B3;transform:scaleY(1.08);transform-origin:0 14.67px;">,</div>
<div class="b" style="left:249px;top:684px;width:1332px;height:1px;background:#E3E3E3;"></div>
<div class="b" style="left:262px;top:665px;width:14px;height:5px;background:#8EB3D8;border:1px solid #4F7CAB;"></div>
<div class="t" style="left:289.5px;top:659.83px;font-size:15.5px;line-height:18.6px;color:#B3B3B3;transform:scaleY(1.08);transform-origin:0 14.67px;">"<span style="letter-spacing:0.43px">ЗАПСИБКОМБАНК</span>" <span style="letter-spacing:0.43px">ОАО</span></div>
<div class="t" style="left:716.5px;top:659.83px;font-size:15.5px;line-height:18.6px;color:#B3B3B3;transform:scaleY(1.08);transform-origin:0 14.67px;"><span style="letter-spacing:0.38px">047130639</span></div>
<div class="t" style="left:851.5px;top:659.83px;font-size:15.5px;line-height:18.6px;color:#B3B3B3;transform:scaleY(1.08);transform-origin:0 14.67px;"><span style="letter-spacing:0.38px">30101810100000000639</span></div>
<div class="t" style="left:1055px;top:659.83px;font-size:15.5px;line-height:18.6px;color:#B3B3B3;transform:scaleY(1.08);transform-origin:0 14.67px;"><span style="letter-spacing:0.43px">Г</span>. <span style="letter-spacing:0.43px">ТЮМЕНЬ</span></div>
<div class="t" style="left:1258px;top:659.83px;font-size:15.5px;line-height:18.6px;color:#B3B3B3;transform:scaleY(1.08);transform-origin:0 14.67px;">,</div>
<div class="b" style="left:249px;top:717px;width:1332px;height:1px;background:#E3E3E3;"></div>
<div class="b" style="left:262px;top:698px;width:14px;height:5px;background:#8EB3D8;border:1px solid #4F7CAB;"></div>
<div class="t" style="left:289.5px;top:692.83px;font-size:15.5px;line-height:18.6px;color:#333333;transform:scaleY(1.08);transform-origin:0 14.67px;">"<span style="letter-spacing:0.43px">ЗИРААТ</span> <span style="letter-spacing:0.43px">БАНК</span> (<span style="letter-spacing:0.43px">МОСКВА</span>)" (<span style="letter-spacing:0.43px">АО</span>)</div>
<div class="t" style="left:716.5px;top:692.83px;font-size:15.5px;line-height:18.6px;color:#333333;transform:scaleY(1.08);transform-origin:0 14.67px;"><span style="letter-spacing:0.38px">044525116</span></div>
<div class="t" style="left:851.5px;top:692.83px;font-size:15.5px;line-height:18.6px;color:#333333;transform:scaleY(1.08);transform-origin:0 14.67px;"><span style="letter-spacing:0.38px">30101810700000000116</span></div>
<div class="t" style="left:1055px;top:692.83px;font-size:15.5px;line-height:18.6px;color:#333333;transform:scaleY(1.08);transform-origin:0 14.67px;">г. <span style="letter-spacing:0.43px">М</span>осква</div>
<div class="t" style="left:1258px;top:692.83px;font-size:15.5px;line-height:18.6px;color:#333333;transform:scaleY(1.08);transform-origin:0 14.67px;">ул <span style="letter-spacing:0.43px">М</span>арксистская, <span style="letter-spacing:0.38px">16</span></div>
<div class="b" style="left:249px;top:750px;width:1332px;height:1px;background:#E3E3E3;"></div>
<div class="b" style="left:262px;top:731px;width:14px;height:5px;background:#8EB3D8;border:1px solid #4F7CAB;"></div>
<div class="t" style="left:289.5px;top:725.83px;font-size:15.5px;line-height:18.6px;color:#B3B3B3;transform:scaleY(1.08);transform-origin:0 14.67px;">"<span style="letter-spacing:0.43px">ИВАНОВСКИЙ</span>" <span style="letter-spacing:0.43px">ФИЛИАЛ</span> "<span style="letter-spacing:0.43px">РЕГНУМ</span> <span style="letter-spacing:0.43px">БАНК</span>" (<span style="letter-spacing:0.43px">ООО</span>)</div>
<div class="t" style="left:716.5px;top:725.83px;font-size:15.5px;line-height:18.6px;color:#B3B3B3;transform:scaleY(1.08);transform-origin:0 14.67px;"><span style="letter-spacing:0.38px">042406831</span></div>
<div class="t" style="left:851.5px;top:725.83px;font-size:15.5px;line-height:18.6px;color:#B3B3B3;transform:scaleY(1.08);transform-origin:0 14.67px;"><span style="letter-spacing:0.38px">30101810024060000831</span></div>
<div class="t" style="left:1055px;top:725.83px;font-size:15.5px;line-height:18.6px;color:#B3B3B3;transform:scaleY(1.08);transform-origin:0 14.67px;"><span style="letter-spacing:0.43px">Г</span>. <span style="letter-spacing:0.43px">ИВАНОВО</span></div>
<div class="t" style="left:1258px;top:725.83px;font-size:15.5px;line-height:18.6px;color:#B3B3B3;transform:scaleY(1.08);transform-origin:0 14.67px;"></div>
<div class="b" style="left:398px;top:758px;width:5.5px;height:2.2px;border-bottom:1px solid #8A9AA6;border-radius:0 0 3px 3px;"></div>
<svg style="left:0px;top:0px;" width="1600" height="900" viewBox="0 0 1600 900"><path d="M260.3 772.6 L265 770 L265 775.2 Z" fill="#BDBDBD"/></svg>
<div class="b" style="left:277px;top:767px;width:1137px;height:10px;background:#D4D4D4;border-radius:5px;"></div>
<div class="b" style="left:277px;top:767px;width:1088px;height:10px;background:#9B9B9B;border-radius:5px;"></div>
<svg style="left:0px;top:0px;" width="1600" height="900" viewBox="0 0 1600 900"><path d="M1430.8 772.6 L1426 770 L1426 775.2 Z" fill="#333"/></svg>
<div class="b" style="left:1461px;top:760px;width:121px;height:27px;border:1px solid #A6A6A6;background:#fff;"></div>
<div class="b" style="left:1491px;top:761px;width:1px;height:25px;background:#A6A6A6;"></div>
<div class="b" style="left:1521px;top:761px;width:1px;height:25px;background:#A6A6A6;"></div>
<div class="b" style="left:1551px;top:761px;width:1px;height:25px;background:#A6A6A6;"></div>
<div class="b" style="left:1522px;top:761px;width:59px;height:25px;background:linear-gradient(#fff 40%,#EDEDED);"></div>
<div class="b" style="left:1521px;top:761px;width:1px;height:25px;background:#A6A6A6;"></div>
<div class="b" style="left:1551px;top:761px;width:1px;height:25px;background:#A6A6A6;"></div>
<svg style="left:0px;top:0px;" width="1600" height="900" viewBox="0 0 1600 900"><g fill="#A9A9A9"><rect x="1470" y="769.8" width="12.3" height="1.3"/><path d="M1470 777.5 L1476.2 771.8 L1482.3 777.5 Z"/><path d="M1500.2 777.5 L1506.7 771.8 L1513.2 777.5 Z"/></g><g fill="#262626"><path d="M1530.2 771 L1543.3 771 L1536.75 777.8 Z"/><path d="M1560.3 771 L1573.3 771 L1566.8 777.5 Z"/></g><rect x="1560.3" y="781.9" width="13" height="1.3" fill="#7A7A7A"/></svg>
<div class="b" style="left:468px;top:314px;width:677px;height:193.5px;background:#fff;border:1px solid #9E9E9E;box-shadow:0 3px 14px rgba(0,0,0,0.22);"></div>
<svg style="left:495px;top:352px;" width="84" height="84" viewBox="0 0 84 84"><circle cx="42" cy="42.5" r="37.3" fill="none" stroke="#E8485E" stroke-width="2.6"/><path d="M26.5 27 L58 58.5 M58 27 L26.5 58.5" stroke="#E8485E" stroke-width="2.6"/></svg>
<svg style="left:1116px;top:324px;" width="20" height="20" viewBox="0 0 20 20"><path d="M4 3 L16 15 M16 3 L4 15" stroke="#333" stroke-width="1.5"/></svg>
<div class="t" style="left:603px;top:366.33px;font-size:15.5px;line-height:18.6px;color:#333;transform:scaleY(1.08);transform-origin:0 14.67px;">Текст XML содержит недопустимый символ в позиции 15 :</div>
<svg style="left:0px;top:0px;z-index:3;" width="1600" height="900" viewBox="0 0 1600 900"><g fill="none" stroke="#333" stroke-width="1">
<rect x="605.5" y="389.5" width="7" height="10"/>
<rect x="628.5" y="389.5" width="7" height="10"/>
<path d="M643.5 386 V400.5 M647.5 386 V400.5 M639 392.5 H643.5 M647.5 392.5 H652 M638.5 400.5 H653" stroke-width="1.2"/>
<path d="M666 388.5 H672.5 L667.5 393.5 M676.5 391.5 L673.5 395 M680 388 L678.5 390 L679.5 393 M666 398.5 H671.5 M675.5 395 V401 M675.5 398 H679" stroke-width="0.9"/>
<path d="M740 388 H746 M739 390.5 H748 V393 H739 Z M737 395 H751 M738 396.5 H750 M739.5 396.5 V400.8 M748.5 396.5 V400.8 M743.5 396.5 V399 M737 398.5 L739.5 396.5" stroke-width="1.1"/>
<path d="M755 388 Q752 394 755 401 M764.5 388 Q767.5 394 764.5 401 M756.5 391.5 H762.5 V397" stroke-width="1"/>
<path d="M769 388.5 H775.5 L770.5 393.5 M779.5 391.5 L776.5 395 M783 388 L781.5 390 L782.5 393 M769 398.5 H774.5 M778.5 395 V401 M778.5 398 H782" stroke-width="0.9"/>
<path d="M784.5 400 L789.5 388.5 L794.5 400 M786.5 396 H792.5 M787 386.5 H792" stroke-width="1.1"/>
<rect x="796.5" y="389.5" width="7" height="10.5" stroke-width="1.1"/>
<rect x="604.8" y="410.8" width="6.5" height="9.5" stroke-width="1.5"/>
</g></svg>
<div class="t" style="left:805.5px;top:386.33px;font-size:15.5px;line-height:18.6px;color:#333;transform:scaleY(1.08);transform-origin:0 14.67px;"><span style="letter-spacing:0.43px">Г</span>. <span style="letter-spacing:0.43px">САНКТ</span>-<span style="letter-spacing:0.43px">ПЕТЕРБУРГ</span></div>
<div class="b" style="left:1035px;top:455px;width:88px;height:40px;border:1px solid #F2C418;"></div>
<div class="b" style="left:1038px;top:458px;width:82px;height:33px;border:1px solid #A48F1C;border-radius:3px;background:linear-gradient(#FFEA3C,#FFDD00 45%,#E9C800);box-shadow:0 1px 1px rgba(0,0,0,0.3);"></div>
<div class="t" style="left:1067px;top:465.37px;font-size:16.3px;line-height:19.56px;color:#30334A;transform:scaleY(1.02);transform-origin:0 15.43px;font-weight:bold;">OK</div>
<div class="b" style="left:233px;top:801px;width:1367px;height:2px;background:#A3A3A3;"></div>
<div class="b" style="left:7px;top:803px;width:1593px;height:38px;background:#B0B0B0;"></div>
<div class="b" style="left:13.5px;top:808.5px;width:29px;height:27px;background:linear-gradient(#FFFFFF,#F0F0F0);border:1px solid #9A9A9A;border-radius:3px;"></div>
<svg style="left:0px;top:0px;" width="1600" height="900" viewBox="0 0 1600 900"><defs><linearGradient id="mg" x1="0" y1="0" x2="0" y2="1"><stop offset="0" stop-color="#B5D3EE"/><stop offset="1" stop-color="#3F82BE"/></linearGradient></defs><rect x="28" y="814.8" width="9.3" height="7.8" fill="url(#mg)"/><rect x="28" y="814.8" width="9.3" height="1.2" fill="#2F5E8C"/><path d="M31.5 822.6 H33.8 V824.5 H36.5 V825.3 H29 V824.5 H31.5 Z" fill="#8A8A8A"/><rect x="21.3" y="819.3" width="10.5" height="9" fill="#fff"/><rect x="21.8" y="819.7" width="9.5" height="8" fill="url(#mg)"/><rect x="21.8" y="819.7" width="9.5" height="1.2" fill="#2F5E8C"/><path d="M25.3 827.7 H27.8 V829.5 H30.5 V830.5 H22.8 V829.5 H25.3 Z" fill="#8A8A8A"/></svg>
<div class="t" style="left:49px;top:809.33px;font-size:15.5px;line-height:18.6px;color:#F00C0C;transform:scaleY(1.08);transform-origin:0 14.67px;"><span style="letter-spacing:0.43px">Т</span>екущие вызовы: <span style="letter-spacing:0.38px">1</span></div>
<div class="t" style="left:200px;top:809.33px;font-size:15.5px;line-height:18.6px;color:#F00C0C;transform:scaleY(1.08);transform-origin:0 14.67px;"><span style="letter-spacing:0.43px">Н</span>акопленные вызовы: <span style="letter-spacing:0.38px">154</span></div>
<div class="b" style="left:7px;top:841px;width:1593px;height:1px;background:#E6E6E6;"></div>
<div class="b" style="left:7px;top:842px;width:1593px;height:38px;background:#0C0D10;"></div>
<div class="b" style="left:790px;top:842px;width:40px;height:38px;background:#3A3A3A;"></div>
<div class="b" style="left:830px;top:842px;width:5px;height:38px;background:#252527;"></div>
<div class="b" style="left:151px;top:877px;width:35px;height:3px;background:#76B9ED;"></div>
<div class="b" style="left:243px;top:877px;width:35px;height:3px;background:#76B9ED;"></div>
<div class="b" style="left:427px;top:877px;width:35px;height:3px;background:#76B9ED;"></div>
<div class="b" style="left:749px;top:877px;width:35px;height:3px;background:#76B9ED;"></div>
<div class="b" style="left:790px;top:877px;width:40px;height:3px;background:#76B9ED;"></div>
<div class="b" style="left:830px;top:877px;width:5px;height:3px;background:#4F7FA8;"></div>
<svg style="left:0px;top:0px;z-index:4;" width="1600" height="900" viewBox="0 0 1600 900">
<g fill="#fff">
 <path d="M18.7 852.3 L27 851.2 V860 H18.7 Z"/><path d="M28.3 851 L39.3 849.6 V860 H28.3 Z"/>
 <path d="M18.7 861.2 H27 V870 L18.7 868.9 Z"/><path d="M28.3 861.2 H39.3 V871.4 L28.3 870.1 Z"/>
</g>
<circle cx="76.8" cy="857.5" r="6.3" fill="none" stroke="#fff" stroke-width="1.4"/>
<line x1="72.3" y1="862.3" x2="64.3" y2="870.8" stroke="#fff" stroke-width="1.5"/>
<g fill="none" stroke="#fff" stroke-width="1.3">
 <path d="M109.5 851 V853.5 H121.5 V851"/><rect x="109.5" y="856.3" width="12" height="8.5"/><path d="M109.5 870.5 V868 H121.5 V870.5"/>
 <path d="M127.3 851 V870.5"/>
</g>
<rect x="125.8" y="857.8" width="3" height="3" fill="#fff"/>
<circle cx="168" cy="860.7" r="9.3" fill="#DB4437"/>
<path d="M168 860.7 L159.95 856.05 A9.3 9.3 0 0 0 163.35 868.75 Z" fill="#0F9D58"/>
<path d="M168 860.7 L163.35 868.75 A9.3 9.3 0 0 0 176.05 856.05 Z" fill="#FFCD40"/>
<path d="M168 860.7 L176.05 856.05 A9.3 9.3 0 0 0 168 851.4 Z" fill="#DB4437"/>
<circle cx="168" cy="860.7" r="4.3" fill="#fff"/><circle cx="168" cy="860.7" r="3.3" fill="#4285F4"/>
<circle cx="213.6" cy="860.7" r="9.3" fill="#E8E8E8"/>
<path d="M209.3 854.5 L213.6 861 L217.9 854.5 M213.6 861 V867" fill="none" stroke="#E3141B" stroke-width="1.9"/>
<path d="M252.5 866 C248 870 252 871 259 870.5 C264 870 266.5 868 267.5 866.5 C264.5 868 261.5 868.5 259 868 C255.5 867.5 254 865 254.3 862.8 H267.8 C268.5 856 265 852.3 259.5 852.3 C253 852.3 249.5 857 249.5 860.5 C251 857.5 253.5 856 256 856 C258.5 856 260.8 857.2 261 859.8 H254.8 C254.5 862 253.8 864 252.5 866 Z" fill="#1E80DA"/>
<path d="M296.8 854.2 Q296.8 852.8 298.2 852.8 H302.5 L304.5 855 H313.8 Q315.2 855 315.2 856.4 V867.5 Q315.2 868.7 313.8 868.7 H298.2 Q296.8 868.7 296.8 867.5 Z" fill="#F6CE6A"/>
<path d="M296.8 857.5 H315.2 V867.5 Q315.2 868.7 313.8 868.7 H298.2 Q296.8 868.7 296.8 867.5 Z" fill="#FADB85"/>
<path d="M300.3 868.7 V862 H311.7 V868.7 H309.2 V864.3 H302.8 V868.7 Z" fill="#3AA0E6"/>
<path d="M341.7 856 H361 V871 H341.7 Z" fill="#F4F4F4"/>
<path d="M346.5 856 V853.5 Q346.5 851.3 348.8 851.3 H353.8 Q356 851.3 356 853.5 V856" fill="none" stroke="#F4F4F4" stroke-width="1.5"/>
<rect x="348.3" y="860" width="2.7" height="2.7" fill="#F25022"/><rect x="351.7" y="860" width="2.7" height="2.7" fill="#7FBA00"/>
<rect x="348.3" y="863.4" width="2.7" height="2.7" fill="#00A4EF"/><rect x="351.7" y="863.4" width="2.7" height="2.7" fill="#FFB900"/>
<rect x="388" y="851.2" width="19.7" height="15.3" fill="#EDEDED"/>
<rect x="389.3" y="852.5" width="17.1" height="12.7" fill="#2C7CC4"/>
<path d="M389.3 859 Q398 856 406.4 859.5 V865.2 H389.3 Z" fill="#0F3F8A"/>
<rect x="390.5" y="857.5" width="14" height="1.4" fill="#CFE5F7"/>
<path d="M395.5 866.5 H400.5 L402.5 870.5 H393.5 Z" fill="#EDEDED"/>
<path d="M436 851.2 L450.5 852.8 L451.5 866 L436.5 864.3 Z" fill="#B9C7D6"/>
<path d="M437.3 852.8 L449.3 854.1 L450 864.4 L437.8 863 Z" fill="#1D3FCF"/>
<ellipse cx="443" cy="868.3" rx="5.5" ry="2.2" fill="#9A9A9A"/>
<circle cx="449.7" cy="866.3" r="4.5" fill="#D5D5D5"/><path d="M447.5 867.5 L451.5 864.5 M448 865.5 L450.8 868" stroke="#3A9C3A" stroke-width="1.1"/>
<path d="M479.7 851.3 H496 L500 861 L496 870.8 H479.7 Z" fill="#E9E9E9"/>
<text x="486" y="866.5" font-family="Liberation Sans" font-size="14" fill="#E0201B">Я</text>
<path d="M525.8 851.3 H541.5 L545.7 861 L541.5 870.8 H525.8 Z" fill="#5A8DCC"/>
<path d="M528.5 856.3 H539.5 V865.7 H528.5 Z M528.5 856.3 L534 861.5 L539.5 856.3 M528.5 865.7 L532.5 861 M539.5 865.7 L535.5 861" fill="none" stroke="#EAF2FB" stroke-width="1.2"/>
<path d="M572 851.3 H587.5 L591.7 861 L587.5 870.8 H572 Z" fill="#5E98D4"/>
<path d="M575 858 H578 L582.5 854 V868 L578 864 H575 Z" fill="#F2F7FC"/>
<path d="M584.5 857.5 Q586.5 861 584.5 864.5 M586.5 855.5 Q589.5 861 586.5 866.5" fill="none" stroke="#F2F7FC" stroke-width="1.2"/>
<ellipse cx="627.7" cy="860.4" rx="8.8" ry="9" fill="#C8101A"/>
<ellipse cx="627.7" cy="860.4" rx="3.4" ry="7" fill="#0C0D10"/>
<path d="M663.7 851.3 H682 V868.5 H663.7 Z" fill="#F0F4FA"/>
<path d="M663.7 864.5 H682 V868.5 H663.7 Z" fill="#C9D7EC"/>
<text x="664.5" y="864" font-family="Liberation Sans" font-size="13" font-weight="bold" fill="#1F4FA8">W</text>
<path d="M709.7 858 L720 850.8 L730 858 V870.3 H709.7 Z" fill="#1565C0"/>
<path d="M709.7 858 H730 V870.3 H709.7 Z" fill="#35A4EC"/>
<path d="M712 857 H728 L720 863 Z" fill="#F2F2F2"/>
<path d="M709.7 870.3 L720 862.3 L730 870.3" fill="none" stroke="#1E7CD0" stroke-width="0.8"/>
<circle cx="766" cy="860.7" r="9.3" fill="#12A5E8"/>
<circle cx="760.5" cy="855" r="4.5" fill="#12A5E8"/><circle cx="771.5" cy="866.3" r="4.5" fill="#12A5E8"/>
<text x="760.7" y="866.5" font-family="Liberation Sans" font-size="15" font-weight="bold" fill="#fff">S</text>
<circle cx="811.7" cy="860.5" r="9.2" fill="#F6C624"/>
<circle cx="811.7" cy="858.5" r="7" fill="#FBE488"/>
<path d="M804.5 859.5 L806.5 857.5 V863 M809 860 A3 3 0 0 1 812 857 H816 M809 860 A3 3 0 0 0 812 863 H819" fill="none" stroke="#D22A16" stroke-width="1.7"/>
<g fill="none" stroke="#fff" stroke-width="1.3">
 <circle cx="1226.5" cy="854.5" r="3"/><path d="M1220.5 866 Q1221 859.5 1226.5 859.5 Q1232 859.5 1232 863"/>
 <circle cx="1218" cy="859.3" r="3"/><path d="M1212.5 869.5 Q1212.8 864.5 1218 864.5 Q1223.3 864.5 1223.5 869.5"/>
 <path d="M1257 865.5 L1265 857.8 L1273.2 865.5"/>
 <rect x="1297" y="857" width="16.5" height="8.5"/><path d="M1313.5 859.5 H1315.3 V863 H1313.5"/>
 <path d="M1334.5 858.7 H1338 L1342 855 V868 L1338 864.3 H1334.5 Z"/>
 <path d="M1345 858.5 Q1346.8 861.5 1345 864.5 M1348 856.5 Q1351 861.5 1348 866.5 M1351.5 854.5 Q1355.3 861.5 1351.5 868.5" stroke="#BFBFBF" stroke-width="1.1"/>
 <rect x="1410.5" y="853.5" width="29" height="15.5"/>
</g>
<path d="M1294.8 855 H1298.5 M1296.5 853 V857" stroke="#fff" stroke-width="1.2"/>
<rect x="1298.5" y="858.5" width="12" height="5.5" fill="#fff"/>
<g fill="#fff">
 <rect x="1413.5" y="856.8" width="1.6" height="1.6"/><rect x="1416.8" y="856.8" width="1.6" height="1.6"/><rect x="1420.1" y="856.8" width="1.6" height="1.6"/><rect x="1423.4" y="856.8" width="1.6" height="1.6"/><rect x="1426.7" y="856.8" width="1.6" height="1.6"/><rect x="1430" y="856.8" width="1.6" height="1.6"/><rect x="1433.3" y="856.8" width="1.6" height="1.6"/><rect x="1436.2" y="856.8" width="1.6" height="1.6"/>
 <rect x="1413.5" y="860.3" width="1.6" height="1.6"/><rect x="1416.8" y="860.3" width="1.6" height="1.6"/><rect x="1420.1" y="860.3" width="1.6" height="1.6"/><rect x="1423.4" y="860.3" width="1.6" height="1.6"/><rect x="1426.7" y="860.3" width="1.6" height="1.6"/><rect x="1430" y="860.3" width="1.6" height="1.6"/><rect x="1433.3" y="860.3" width="1.6" height="1.6"/><rect x="1436.2" y="860.3" width="1.6" height="1.6"/>
 <rect x="1416" y="864" width="18" height="1.6"/>
</g>
<path d="M1377 860 Q1385 850.5 1394 858.5" fill="none" stroke="#E8E8E8" stroke-width="2.2"/>
<ellipse cx="1384.5" cy="861" rx="6.5" ry="3" fill="#E5E5E5"/>
<circle cx="1389.7" cy="865.5" r="4.9" fill="#F07A10"/>
<path d="M1389.7 862.5 V866.2 M1389.7 867.5 V868.5" stroke="#fff" stroke-width="1.3"/>
<path d="M1555.8 853 H1576 V867.5 H1568.5 L1565.8 870.8 L1563 867.5 H1555.8 Z" fill="#fff"/>
<g stroke="#0C0D10" stroke-width="1.1"><path d="M1559 856.8 H1572.5 M1559 860 H1572.5 M1559 863.2 H1568"/></g>
</svg>
<div class="t" style="left:1453px;top:854.53px;font-size:13.7px;line-height:16.44px;color:#fff;">ENG</div>
<div class="t" style="left:1502px;top:854.53px;font-size:13.7px;line-height:16.44px;color:#fff;">9:26</div>
</body></html>
